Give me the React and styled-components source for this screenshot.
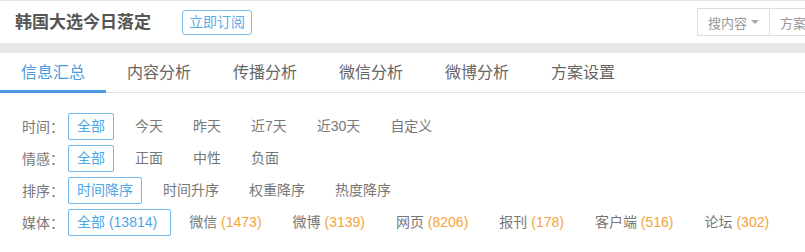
import React from 'react'
import styled, { createGlobalStyle } from 'styled-components'

const Global = createGlobalStyle`
  html, body { margin: 0; padding: 0; background: #fff; overflow: hidden; }
  body { font-family: "Liberation Sans", "Noto Sans CJK SC", sans-serif; }
`

const Header = styled.div`
  display: flex;
  align-items: center;
  height: 42px;
  border-top: 1px solid #e4e4e4;
  padding-left: 15px;
  white-space: nowrap;
  overflow: hidden;
`
const Title = styled.div`
  font-size: 17px;
  font-weight: bold;
  color: #555;
  line-height: 20px;
  margin-top: 2px;
`
const SubButton = styled.div`
  margin-left: 31px;
  height: 23px;
  line-height: 23px;
  padding: 0 6px;
  border: 1px solid #7dbff0;
  border-radius: 3px;
  color: #5aaee8;
  font-size: 14px;
`
const RightGroup = styled.div`
  display: flex;
  margin-left: 446px;
  flex-shrink: 0;
`
const Drop = styled.div`
  display: flex;
  align-items: center;
  height: 26px;
  padding: 0 10px;
  border: 1px solid #ddd;
  margin-left: -1px;
  font-size: 13px;
  color: #999;
  gap: 4px;
`
const Caret = styled.span`
  width: 0;
  height: 0;
  border-left: 4px solid transparent;
  border-right: 4px solid transparent;
  border-top: 4px solid #aaa;
`
const Band = styled.div`
  height: 10px;
  background: #e8e8e8;
`
const Tabs = styled.div`
  display: flex;
  height: 39px;
  border-bottom: 1px solid #e2e2e2;
`
const Tab = styled.div`
  padding: 0 21px;
  font-size: 16px;
  line-height: 39px;
  color: ${p => (p.$active ? '#4a9be0' : '#666')};
  box-shadow: ${p => (p.$active ? 'inset 0 -3px 0 #4a9be0' : 'none')};
  margin-bottom: -1px;
  height: 40px;
  box-sizing: border-box;
`
const Filters = styled.div`
  padding: 17px 0 0 22px;
`
const Row = styled.div`
  display: flex;
  align-items: center;
  height: 32px;
  white-space: nowrap;
`
const Label = styled.div`
  font-size: 14px;
  color: #777;
  width: 46px;
`
const Item = styled.div`
  font-size: 14px;
  height: 25px;
  line-height: 25px;
  padding: 0 ${p => p.$padRight || 8}px 0 8px;
  margin-right: ${p => p.$gap || 12}px;
  border: 1px solid ${p => (p.$active ? '#72b9ee' : 'transparent')};
  border-radius: 2px;
  color: ${p => (p.$active ? '#4ea6e6' : '#777')};
`
const Count = styled.span`
  color: ${p => (p.$active ? '#4ea6e6' : '#f5a33a')};
`

const rows = [
  { label: '时间：', items: ['全部', '今天', '昨天', '近7天', '近30天', '自定义'] },
  { label: '情感：', items: ['全部', '正面', '中性', '负面'] },
  { label: '排序：', items: ['时间降序', '时间升序', '权重降序', '热度降序'] },
]
const media = [
  ['全部', 13814],
  ['微信', 1473],
  ['微博', 3139],
  ['网页', 8206],
  ['报刊', 178],
  ['客户端', 516],
  ['论坛', 302],
]
const tabs = ['信息汇总', '内容分析', '传播分析', '微信分析', '微博分析', '方案设置']

const App = () => {
  return (
    <div>
      <Global />
      <Header>
        <Title>韩国大选今日落定</Title>
        <SubButton>立即订阅</SubButton>
        <RightGroup>
          <Drop>搜内容<Caret /></Drop>
          <Drop>方案内容<Caret /></Drop>
        </RightGroup>
      </Header>
      <Band />
      <Tabs>
        {tabs.map((t, i) => (
          <Tab key={t} $active={i === 0}>{t}</Tab>
        ))}
      </Tabs>
      <Filters>
        {rows.map(r => (
          <Row key={r.label}>
            <Label>{r.label}</Label>
            {r.items.map((it, i) => (
              <Item key={it} $active={i === 0}>{it}</Item>
            ))}
          </Row>
        ))}
        <Row>
          <Label>媒体：</Label>
          {media.map(([name, n], i) => (
            <Item
              key={name}
              $active={i === 0}
              $gap={i === 0 ? 9 : 13}
              $padRight={i === 0 ? 13 : 8}
            >
              {name} <Count $active={i === 0}>({n})</Count>
            </Item>
          ))}
        </Row>
      </Filters>
    </div>
  )
}

export default App
